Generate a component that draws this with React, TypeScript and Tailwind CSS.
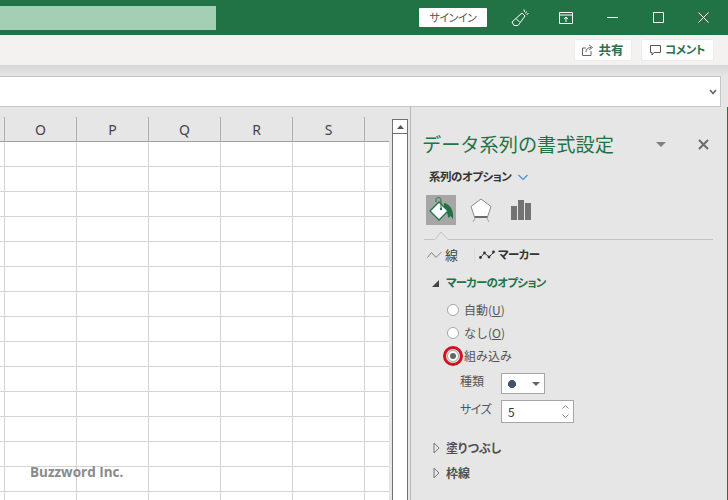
import React from "react";

const jp = { fontFamily: '"Noto Sans CJK JP", "Noto Sans", sans-serif' };
const palt = "[font-feature-settings:'palt']";
const COLUMNS = ["O", "P", "Q", "R", "S"];
const ROWS = Array.from({ length: 15 }, (_, i) => i);

function Radio({ checked, label }: { checked?: boolean; label: React.ReactNode }) {
  return (
    <div className="flex items-center h-[23px]">
      <div className="relative w-[12px] h-[12px] rounded-full bg-white border border-[#a6a6a6] flex items-center justify-center ml-[1px]">
        {checked && <div className="w-[6px] h-[6px] rounded-full bg-[#666666]" />}
        {checked && <div className="absolute w-[20px] h-[20px] -left-[5px] -top-[5px] rounded-full border-[3px] border-[#d2121f]" />}
      </div>
      <span className="ml-[5px] text-[12px] text-[#555555]">{label}</span>
    </div>
  );
}

function Section({ title, top }: { title: string; top: string }) {
  return (
    <div className={`flex items-center h-[25px] pl-[22px] ${top}`}>
      <svg width="7" height="12" viewBox="0 0 7 12" className="mr-[6px]">
        <path d="M1 1 L6 6 L1 11 Z" fill="none" stroke="#777777" />
      </svg>
      <span className={`text-[12px] font-bold text-[#505050] ${palt}`}>{title}</span>
    </div>
  );
}

function FormatPanel() {
  return (
    <div className="flex-1 flex flex-col border-l border-[#b9b9b9] border-r border-r-[#217346] bg-[#e6e6e6] pt-[22px]" style={jp}>
      <div className="flex items-center h-[30px] pl-[11px]">
        <span className="text-[19.2px] leading-[30px] font-normal text-[#217346] w-[234px] whitespace-nowrap">データ系列の書式設定</span>
        <svg width="10" height="5" viewBox="0 0 10 5"><path d="M0 0 H10 L5 5 Z" fill="#808080" /></svg>
        <svg width="11" height="11" viewBox="0 0 11 11" className="ml-[32px]">
          <path d="M1 1 L10 10 M10 1 L1 10" stroke="#6b6b6b" strokeWidth="2" />
        </svg>
      </div>
      <div className="flex items-center h-[20px] pl-[18px] mt-[8px]">
        <span className={`text-[11.5px] tracking-[-0.5px] font-bold text-[#333333] w-[89px] whitespace-nowrap ${palt}`}>系列のオプション</span>
        <svg width="10" height="7" viewBox="0 0 10 7"><path d="M0.5 1 L5 5.5 L9.5 1" fill="none" stroke="#4a90d0" strokeWidth="1.2" /></svg>
      </div>
      <div className="flex items-center h-[30px] pl-[15px] mt-[8px]">
        <div className="w-[30px] h-[30px] bg-[#a6a6a6] flex items-center justify-center">
          <svg width="28" height="28" viewBox="0 0 28 28">
            <path d="M17 7 C23 8 27 14 26 23 L23.5 20 L21 22 C21 18 20 15 17 12 Z" fill="#217346" />
            <path d="M12 6 L21 15 L12 24 L3 15 Z" fill="#ffffff" stroke="#217346" strokeWidth="1.3" />
            <path d="M9 6 V3.5 C9 1 14 1 14 3.5 V12" stroke="#217346" strokeWidth="1" fill="none" />
            <circle cx="14" cy="13" r="1.2" fill="#217346" />
          </svg>
        </div>
        <svg width="24" height="26" viewBox="0 0 24 26" className="ml-[13px]">
          <path d="M12 2 L22 9.5 L18.5 20 H5.5 L2 9.5 Z" fill="#ffffff" stroke="#8a8a8a" strokeWidth="1" />
          <path d="M5.5 20 H18.5" stroke="#6b6b6b" strokeWidth="2" />
          <path d="M6 21 L4 25 M18 21 L20 25" stroke="#a6a6a6" strokeWidth="1" />
        </svg>
        <div className="flex items-end h-[20px] ml-[18px] gap-[1px]">
          <div className="w-[6px] h-[14px] bg-[#737373]" />
          <div className="w-[6px] h-[20px] bg-[#737373]" />
          <div className="w-[6px] h-[17px] bg-[#737373]" />
        </div>
      </div>
      <svg width="290" height="9" viewBox="0 0 290 9" className="ml-[13px] mt-[6px] block">
        <path d="M0 8.5 H11 L17 1 L24 8.5 H289" fill="none" stroke="#c4c4c4" />
      </svg>
      <div className="flex items-center h-[23px] pl-[16px] mt-[3px] text-[#444444]">
        <svg width="15" height="10" viewBox="0 0 15 10"><path d="M0.5 7.5 L4.5 2.5 L9 7.5 L14.5 2" fill="none" stroke="#808080" /></svg>
        <span className="text-[13px] ml-[3px]">線</span>
        <div className="w-px h-[16px] bg-[#dcdcdc] ml-[16px]" />
        <svg width="16" height="10" viewBox="0 0 16 10" className="ml-[4px]">
          <path d="M1 8 L5.5 3 L10 7 L15 2" fill="none" stroke="#333333" />
          <circle cx="1.5" cy="7.5" r="1.4" fill="#333333" />
          <circle cx="5.5" cy="3" r="1.4" fill="#333333" />
          <circle cx="10" cy="7" r="1.4" fill="#333333" />
          <circle cx="14.5" cy="2" r="1.4" fill="#333333" />
        </svg>
        <span className={`text-[11.5px] tracking-[-0.5px] font-bold text-[#333333] ml-[3px] ${palt}`}>マーカー</span>
      </div>
      <div className="flex items-center h-[22px] pl-[21px] mt-[6px]">
        <svg width="7" height="7" viewBox="0 0 7 7" className="mr-[7px]"><path d="M7 0 V7 H0 Z" fill="#444444" /></svg>
        <span className={`text-[11.5px] tracking-[-0.73px] font-bold text-[#217346] ${palt}`}>マーカーのオプション</span>
      </div>
      <div className="pl-[35px] mt-[4px]">
        <Radio label={<>自動(<u>U</u>)</>} />
        <Radio label={<>なし(<u>O</u>)</>} />
        <Radio checked label="組み込み" />
      </div>
      <div className="flex items-center h-[21px] pl-[49px] mt-[6px]">
        <span className="text-[12px] text-[#555555] w-[41px] pb-[5px]">種類</span>
        <div className="w-[44px] h-[21px] bg-white border border-[#a6a6a6] flex items-center pl-[6px]">
          <svg width="8" height="8" viewBox="0 0 8 8"><path d="M2.5 0 H5.5 L8 2.5 V5.5 L5.5 8 H2.5 L0 5.5 V2.5 Z" fill="#44546a" /></svg>
          <svg width="8" height="4" viewBox="0 0 8 4" className="ml-[16px]"><path d="M0 0 H8 L4 4 Z" fill="#666666" /></svg>
        </div>
      </div>
      <div className="flex items-center h-[23px] pl-[49px] mt-[6px]">
        <span className={`text-[12px] text-[#555555] w-[41px] pb-[5px] tracking-[-0.5px] ${palt}`}>サイズ</span>
        <div className="w-[73px] h-[23px] bg-white border border-[#a6a6a6] flex items-center justify-between pl-[6px] pr-[4px]">
          <span className="text-[12px] text-[#333333]">5</span>
          <div className="flex flex-col gap-[5px]">
            <svg width="7" height="4" viewBox="0 0 7 4"><path d="M0.5 3.5 L3.5 0.5 L6.5 3.5" fill="none" stroke="#808080" /></svg>
            <svg width="7" height="4" viewBox="0 0 7 4"><path d="M0.5 0.5 L3.5 3.5 L6.5 0.5" fill="none" stroke="#808080" /></svg>
          </div>
        </div>
      </div>
      <Section title="塗りつぶし" top="mt-[12px]" />
      <Section title="枠線" top="" />
    </div>
  );
}

function Sheet() {
  return (
    <div className="relative w-[389px] bg-white">
      <div className="flex h-[25px] bg-[#e6e6e6] border-b border-[#a0a0a0] text-[14px] text-[#444444]" style={{ fontFamily: '"Noto Sans", sans-serif' }}>
        <div className="w-[5px] border-r border-[#b0b0b0]" />
        {COLUMNS.map((c) => (
          <div key={c} className="w-[72px] border-r border-[#b0b0b0] flex items-center justify-center">{c}</div>
        ))}
      </div>
      {ROWS.map((r) => (
        <div key={r} className="flex h-[25px] border-b border-[#d4d4d4]">
          <div className="w-[5px] border-r border-[#d4d4d4]" />
          {COLUMNS.map((c) => (
            <div key={c} className="w-[72px] border-r border-[#d4d4d4]" />
          ))}
        </div>
      ))}
      <span className="absolute left-[30px] top-[345px] text-[13.5px] font-bold text-[#8a8a8a]" style={{ fontFamily: '"Open Sans", sans-serif' }}>Buzzword Inc.</span>
    </div>
  );
}

export default function App() {
  return (
    <div className="w-[728px] h-[500px] overflow-hidden flex flex-col bg-[#e6e6e6]" style={jp}>
      <div className="h-[35px] shrink-0 bg-[#217346] flex items-center">
        <div className="w-[216px] h-[24px] bg-[#a3cfb5]" />
        <div className={`w-[68px] h-[19px] bg-white ml-[203px] flex items-center justify-center text-[11px] tracking-[-0.5px] text-[#555555] rounded-[1px] ${palt}`}>サインイン</div>
        <svg width="18" height="18" viewBox="0 0 18 18" className="ml-[24px]" fill="none" stroke="#ffffff" strokeWidth="1">
          <path d="M1 13 L11 4 L14 7 L7 16.5 H3 Z" />
          <path d="M5 9.5 L8.5 13 M13 0.5 L13.5 3 M15.5 2.5 L14.5 4.5 M17.5 4.5 L15.5 5.5" />
        </svg>
        <svg width="14" height="12" viewBox="0 0 14 12" className="ml-[30px]" fill="none" stroke="#ffffff">
          <path d="M0.5 0.5 H13.5 V11.5 H0.5 Z M0.5 3 H13.5 M7 10 V5 M5 7 L7 5 L9 7" />
        </svg>
        <svg width="11" height="1" viewBox="0 0 11 1" className="ml-[34px]"><path d="M0 0.5 H11" stroke="#ffffff" /></svg>
        <svg width="11" height="11" viewBox="0 0 11 11" className="ml-[35px]" fill="none" stroke="#ffffff"><path d="M0.5 0.5 H10.5 V10.5 H0.5 Z" /></svg>
        <svg width="11" height="11" viewBox="0 0 11 11" className="ml-[34px]" fill="none" stroke="#ffffff"><path d="M0.5 0.5 L10.5 10.5 M10.5 0.5 L0.5 10.5" /></svg>
      </div>

      <div className="h-[30px] shrink-0 bg-[#f3f2f1] flex items-center justify-end pr-[14px] gap-[9px]">
        <div className="w-[58px] h-[22px] bg-white rounded-[2px] border border-[#ececec] flex items-center justify-center">
          <svg width="12" height="12" viewBox="0 0 12 12" fill="none" stroke="#666666" className="mr-[4px]">
            <path d="M9 7 V11.5 H0.5 V4 H4 M4 8 C4 5 6 3.5 9 3.5 M7 1 L10.5 3.5 L7 6" />
          </svg>
          <span className="text-[12.5px] font-bold text-[#2f6f4c]">共有</span>
        </div>
        <div className="w-[73px] h-[22px] bg-white rounded-[2px] border border-[#ececec] flex items-center justify-center">
          <svg width="11" height="11" viewBox="0 0 11 11" fill="none" stroke="#555555" className="mr-[4px]">
            <path d="M0.5 0.5 H10.5 V7.5 H4 L2 10 V7.5 H0.5 Z" />
          </svg>
          <span className={`text-[11.5px] tracking-[-0.4px] font-bold text-[#2f6f4c] ${palt}`}>コメント</span>
        </div>
      </div>

      <div className="h-[11px] shrink-0 bg-gradient-to-b from-[#d6d6d6] to-[#e6e6e6]" />

      <div className="h-[31px] shrink-0 mr-[7px] bg-white border-y border-r border-[#c6c6c6] flex items-center justify-end pr-[3px]">
        <svg width="8" height="6" viewBox="0 0 8 6"><path d="M1 1 L4 4.5 L7 1" fill="none" stroke="#666666" strokeWidth="1.6" /></svg>
      </div>

      <div className="flex-1 min-h-0 flex pt-[10px]">
        <Sheet />
        <div className="w-[21px] shrink-0 pl-[3px] pt-[2px]">
          <div className="w-[16px] h-full bg-white border-x border-[#707070]">
            <div className="h-[15px] border border-[#707070] -mx-px flex items-center justify-center">
              <svg width="7" height="4" viewBox="0 0 7 4"><path d="M0 4 H7 L3.5 0 Z" fill="#555555" /></svg>
            </div>
          </div>
        </div>
        <div className="flex-1 -mt-[10px] flex">
          <FormatPanel />
        </div>
      </div>
    </div>
  );
}
